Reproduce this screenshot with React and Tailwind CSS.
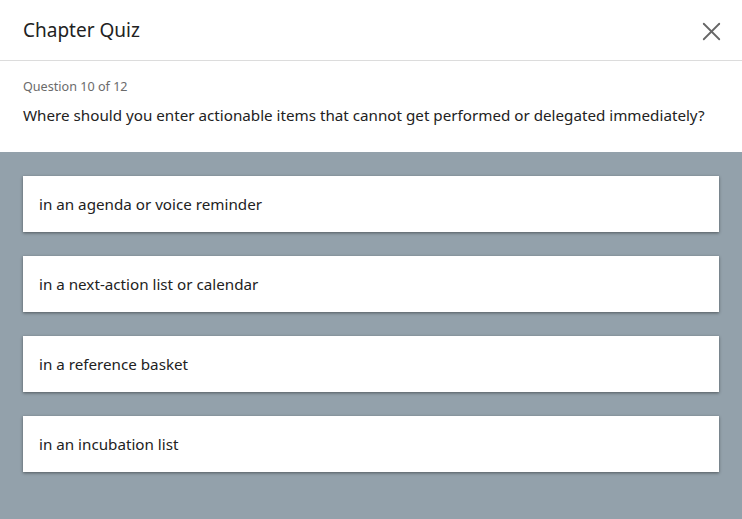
import { X } from 'lucide-react';

const options = [
  'in an agenda or voice reminder',
  'in a next-action list or calendar',
  'in a reference basket',
  'in an incubation list',
];

const App = () => {
  return (
    <div
      className="w-[742px] h-[519px] flex flex-col bg-white text-[#222]"
      style={{ fontFamily: '"Noto Sans", "Open Sans", sans-serif' }}
    >
      {/* Header */}
      <div className="h-[61px] flex items-center justify-between pl-[23px] pr-[15px] border-b border-[#dcdcdc]">
        <h1 className="text-[19px] text-[#222]">Chapter Quiz</h1>
        <button className="text-[#666] mt-[2px]">
          <X size={31} strokeWidth={1.4} />
        </button>
      </div>

      {/* Question */}
      <div className="px-[23px] pt-[17px] h-[91px]">
        <p className="text-[12.6px] text-[#6b6b6b] leading-[18px]">Question 10 of 12</p>
        <p className="text-[15.2px] mt-[8px] leading-[22px] whitespace-nowrap">
          Where should you enter actionable items that cannot get performed or delegated immediately?
        </p>
      </div>

      {/* Options */}
      <div className="flex-1 bg-[#93a1ab] px-[23px] pt-[24px] flex flex-col gap-[24px]">
        {options.map((opt) => (
          <button
            key={opt}
            className="h-[56px] w-[696px] bg-white text-left px-[16px] text-[15.2px] text-[#222] shadow-[0_1px_3px_rgba(0,0,0,0.45)]"
          >
            {opt}
          </button>
        ))}
      </div>
    </div>
  );
};

export default App;
